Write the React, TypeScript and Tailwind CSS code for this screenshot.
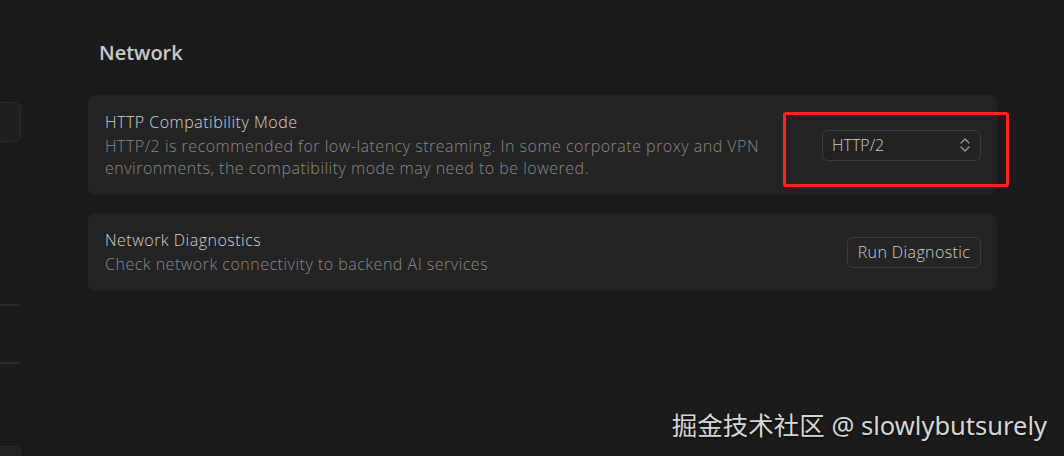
import React, { useState } from 'react';

const font = { fontFamily: '"Segoe UI", "Open Sans", "Noto Sans", sans-serif' };

interface SettingRowProps {
  title: string;
  description: React.ReactNode;
  children: React.ReactNode;
  highlight?: boolean;
}

const UpDown = () => (
  <svg width="12" height="16" viewBox="0 0 12 16" fill="none" stroke="#9a9a9a" strokeWidth="1.3" strokeLinecap="round" strokeLinejoin="round">
    <polyline points="2,6 6,2 10,6" />
    <polyline points="2,10 6,14 10,10" />
  </svg>
);

const SettingRow: React.FC<SettingRowProps> = ({ title, description, children, highlight }) => (
  <div className="relative flex items-center justify-between rounded-lg bg-[#232323] pl-[17px] pr-4 py-4">
    <div className="flex flex-col gap-[2px] tracking-[0.5px]">
      <p className="text-[16px] leading-[22px] text-[#d2d2d2] font-light">{title}</p>
      <p className="text-[16px] leading-[22px] text-[#8b8b8b] font-light">{description}</p>
    </div>
    {children}
    {highlight && (
      <div className="absolute left-[695px] top-[17px] w-[226px] h-[75px] border-[3px] border-[#ff2222] rounded-[3px] pointer-events-none" />
    )}
  </div>
);

const App: React.FC = () => {
  const [mode, setMode] = useState('HTTP/2');

  return (
    <div className="relative w-[1064px] h-[456px] overflow-hidden bg-[#1b1b1b] flex" style={font}>
      {/* cut-off sidebar */}
      <div className="w-[21px] flex flex-col shrink-0">
        <div className="shrink-0 mt-[102px] h-[40px] rounded-r-md bg-[#202020] border border-l-0 border-[#2a2a2a]" />
        <div className="shrink-0 mt-[162px] h-[2px] w-[20px] bg-[#2a2a2a]" />
        <div className="shrink-0 mt-[56px] h-[2px] w-[20px] bg-[#2a2a2a]" />
        <div className="shrink-0 mt-[82px] h-[20px] rounded-tr-md bg-[#222222] border border-l-0 border-b-0 border-[#2b2b2b]" />
      </div>

      <div className="ml-[67px] w-[909px] flex flex-col">
        <h2 className="mt-[39px] pl-[11px] text-[20px] leading-[28px] font-semibold text-[#c9c9c9]">Network</h2>

        <div className="mt-[28px] flex flex-col gap-[18px]">
          <SettingRow
            title="HTTP Compatibility Mode"
            description={
              <>
                HTTP/2 is recommended for low-latency streaming. In some corporate proxy and VPN
                <br />
                environments, the compatibility mode may need to be lowered.
              </>
            }
            highlight
          >
            <button
              onClick={() => setMode(mode === 'HTTP/2' ? 'HTTP/1.1' : 'HTTP/2')}
              className="w-[159px] h-[31px] flex items-center justify-between pl-[9px] pr-[9px] rounded-md border border-[#3a3a3a] bg-[#222222] text-[16px] text-[#cfcfcf] font-light"
            >
              <span>{mode}</span>
              <UpDown />
            </button>
          </SettingRow>

          <SettingRow title="Network Diagnostics" description="Check network connectivity to backend AI services">
            <button className="w-[134px] h-[31px] flex items-center justify-center rounded-md border border-[#3a3a3a] bg-[#242424] text-[16px] tracking-[0.4px] text-[#cfcfcf] font-light">
              Run Diagnostic
            </button>
          </SettingRow>
        </div>
      </div>

      <div
        className="absolute right-[17px] top-[408px] text-[25.5px] leading-[34px] text-[#d6d6d6] [text-shadow:0_1px_3px_rgba(0,0,0,0.8)]"
        style={{ fontFamily: '"Noto Sans", "Noto Sans CJK SC", sans-serif' }}
      >
        掘金技术社区 @ slowlybutsurely
      </div>
    </div>
  );
};

export default App;
